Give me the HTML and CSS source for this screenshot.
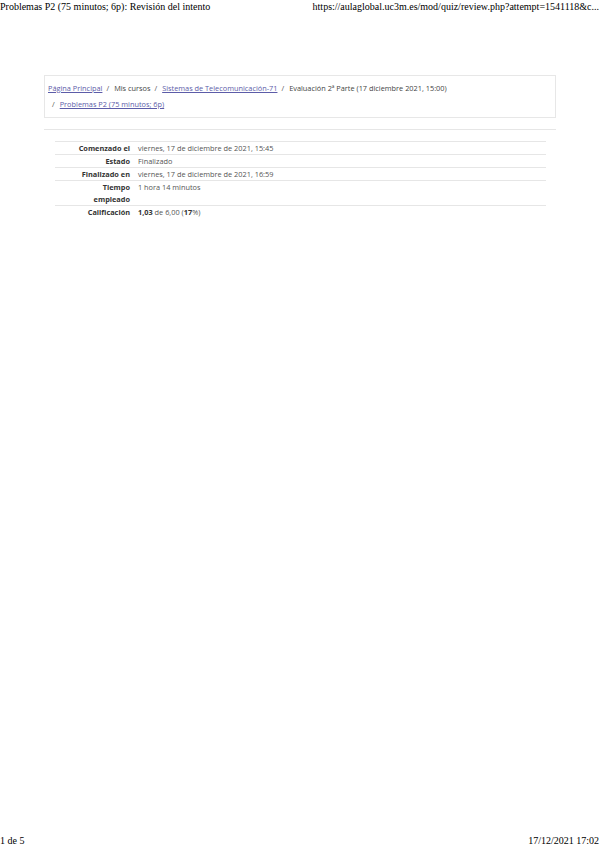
FILE: index.html
```html
<!DOCTYPE html>
<html lang="es">
<head>
<meta charset="utf-8">
<title>Problemas P2 (75 minutos; 6p): Revisión del intento</title>
<link rel="stylesheet" href="styles.css">
</head>
<body>
<div class="sheet">
  <header class="print-head">
    <span>Problemas P2 (75 minutos; 6p): Revisión del intento</span>
    <span>https://aulaglobal.uc3m.es/mod/quiz/review.php?attempt=1541118&amp;c...</span>
  </header>
  <main class="page">
    <nav class="crumbs">
      <ol class="crumb-list">
        <li class="crumb"><a href="#">Página Principal</a></li>
        <li class="crumb sep">Mis cursos</li>
        <li class="crumb sep"><a href="#">Sistemas de Telecomunicación-71</a></li>
        <li class="crumb sep">Evaluación 2ª Parte (17 diciembre 2021, 15:00)</li>
        <li class="crumb sep"><a href="#">Problemas P2 (75 minutos; 6p)</a></li>
      </ol>
    </nav>
    <div class="rule"></div>
    <table class="summary">
      <tbody>
        <tr><th>Comenzado el</th><td>viernes, 17 de diciembre de 2021, 15:45</td></tr>
        <tr><th>Estado</th><td>Finalizado</td></tr>
        <tr><th>Finalizado en</th><td>viernes, 17 de diciembre de 2021, 16:59</td></tr>
        <tr><th>Tiempo empleado</th><td>1 hora 14 minutos</td></tr>
        <tr class="last"><th>Calificación</th><td><b>1,03</b> de 6,00 (<b>17</b>%)</td></tr>
      </tbody>
    </table>
  </main>
  <footer class="print-foot">
    <span>1 de 5</span>
    <span>17/12/2021 17:02</span>
  </footer>
</div>
</body>
</html>
```
FILE: styles.css
```css
html, body {
  margin: 0;
  padding: 0;
  background: #fff;
}
.sheet {
  width: 599px;
  height: 848px;
  display: flex;
  flex-direction: column;
}
.print-head, .print-foot {
  display: flex;
  justify-content: space-between;
  font-family: "Liberation Serif", "Times New Roman", serif;
  font-size: 10px;
  line-height: 14px;
  color: #000;
  white-space: nowrap;
}
.page {
  flex: 1;
  padding: 61px 43px 0 44px;
  font-family: "Open Sans", sans-serif;
  font-size: 7.35px;
  color: #444;
}
.crumbs {
  border: 1px solid #e7e7e7;
  padding: 4px 3px 5px;
}
.crumb-list {
  list-style: none;
  margin: 0;
  padding: 0;
  display: flex;
  flex-wrap: wrap;
  line-height: 16px;
}
.crumb {
  white-space: nowrap;
}
.crumb.sep::before {
  content: "/";
  padding: 0 5px 0 4px;
  color: #555;
}
.crumb a {
  color: #5c5ca8;
  text-decoration: underline;
}
.rule {
  border-top: 1px solid #e6e6e6;
  margin-top: 11px;
}
.summary {
  margin: 11px 10px 0 11px;
  width: calc(100% - 21px);
  border-collapse: collapse;
}
.summary tr {
  border-top: 1px solid #e6e6e6;
}
.summary th, .summary td {
  line-height: 12px;
  padding: 0 3px;
  vertical-align: top;
}
.summary th {
  width: 57px;
  padding-left: 18px;
  padding-right: 4px;
  text-align: right;
  font-weight: 700;
  color: #333;
}
.summary td {
  text-align: left;
  color: #555;
  padding-left: 4px;
}
.summary td b {
  color: #333;
}
```
